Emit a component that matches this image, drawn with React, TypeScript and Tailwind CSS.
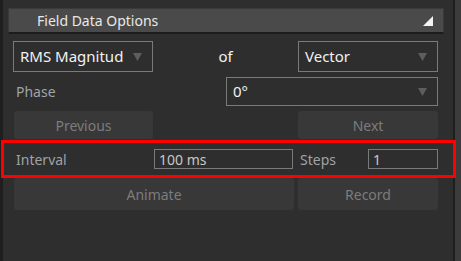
import React from "react";

const Arrow = () => (
  <svg width="9" height="8" viewBox="0 0 9 8" className="shrink-0">
    <polygon points="0,0 9,0 4.5,8" fill="#5e5e5e" />
  </svg>
);

const Dropdown = ({ label, className }: { label: string; className: string }) => (
  <div
    className={`flex items-center justify-between border border-[#7a7a7a] pl-[6px] pr-[10px] text-[15px] text-[#f2f2f2] ${className}`}
  >
    <span className="leading-none">{label}</span>
    <Arrow />
  </div>
);

const Btn = ({ label, className }: { label: string; className: string }) => (
  <div
    className={`flex items-center justify-center rounded-[3px] bg-[#383838] text-[14px] text-[#7c7c7c] ${className}`}
  >
    {label}
  </div>
);

export default function App() {
  return (
    <div
      className="flex h-[261px] w-[461px] overflow-hidden bg-[#2e2e2e]"
      style={{ fontFamily: '"Noto Sans", "Open Sans", sans-serif' }}
    >
      <div className="flex w-[453px] flex-col bg-[linear-gradient(to_right,#1e1e1e_3px,#2e2e2e_3px)] pt-[8px]">
        <div className="ml-[8px] flex h-[26px] w-[436px] items-center justify-between border-x border-t border-b-2 border-x-[#3a3a3a] border-t-[#3a3a3a] border-b-[#1c1c1c] bg-[#4a4a4a] pl-[28px] pr-[10px]">
          <span className="text-[14px] leading-none text-[#e8e8e8]">Field Data Options</span>
          <svg width="10" height="10" viewBox="0 0 10 10">
            <polygon points="10,0 10,10 0,10" fill="#f4f4f4" />
          </svg>
        </div>

        <div className="ml-[13px] mt-[7px] flex w-[425px] items-center">
          <Dropdown label="RMS Magnitud" className="h-[31px] w-[140px]" />
          <div className="flex-1 text-center text-[15px] text-[#f2f2f2]">of</div>
          <Dropdown label="Vector" className="h-[31px] w-[140px]" />
        </div>

        <div className="ml-[13px] mt-[5px] flex w-[425px] items-center">
          <span className="pl-[3px] text-[14px] text-[#9ea3a8]">Phase</span>
          <Dropdown label="0°" className="ml-auto h-[29px] w-[212px]" />
        </div>

        <div className="ml-[14px] mt-[5px] flex w-[424px]">
          <Btn label="Previous" className="h-[28px] w-[139px]" />
          <Btn label="Next" className="ml-auto h-[28px] w-[140px]" />
        </div>

        <div className="relative z-10 ml-[1px] mt-[1px] flex h-[38px] w-[455px] items-center border-[3px] border-[#ff0000] pl-[12px]">
          <span className="w-[138px] text-[14px] text-[#9ea3a8]">Interval</span>
          <div className="flex h-[20px] w-[139px] items-center border border-[#7a7a7a] pl-[4px] text-[14px] text-[#c8c8c8]">
            100 ms
          </div>
          <span className="ml-[7px] w-[68px] text-[14px] text-[#9ea3a8]">Steps</span>
          <div className="flex h-[20px] w-[70px] items-center border border-[#7a7a7a] pl-[4px] text-[14px] text-[#c8c8c8]">
            1
          </div>
        </div>

        <div className="ml-[14px] flex w-[424px]">
          <Btn label="Animate" className="h-[32px] w-[280px]" />
          <Btn label="Record" className="ml-auto h-[32px] w-[140px]" />
        </div>
      </div>
      <div className="w-[2px] bg-[#1e1e1e]" />
      <div className="flex-1 bg-[#3c3c3c]" />
    </div>
  );
}
